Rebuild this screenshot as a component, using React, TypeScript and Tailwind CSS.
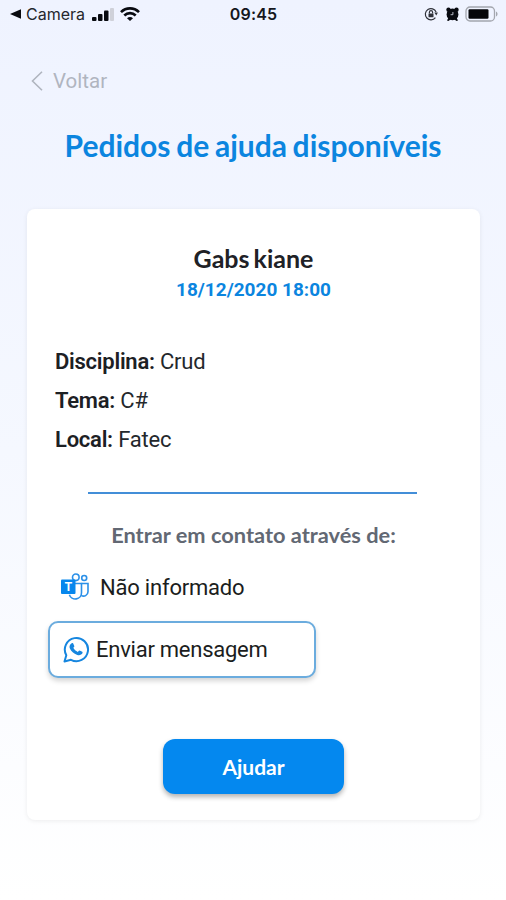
import type { ReactNode } from "react";

function StatusBar() {
    return (
        <div className="grid h-7 grid-cols-[1fr_auto_1fr] items-center pl-[9px] pr-[8px] font-[Inter,sans-serif]">
            <div className="flex items-center">
                <svg className="h-[10px] w-[12px]" viewBox="0 0 12 10" fill="#080a10">
                    <path d="M1 5 12 .3v9.4z" />
                </svg>
                <span className="ml-[5px] w-[60px] whitespace-nowrap text-[16px] leading-5 text-[#25272d]">Camera</span>
                <svg className="ml-[6px] h-[13px] w-[23px]" viewBox="0 0 23 13" fill="#080a10">
                    <rect x="0" y="9" width="4.5" height="4" rx="1" />
                    <rect x="6" y="6" width="4.5" height="7" rx="1" />
                    <rect x="12" y="2.5" width="4.5" height="10.5" rx="1" />
                    <rect x="18" y="0" width="4" height="13" rx="1" fill="#cfd1d9" />
                </svg>
                <svg className="ml-[5px] h-[14px] w-5" viewBox="0 0 20 14" fill="none" stroke="#080a10" strokeWidth="2.6">
                    <path d="M1 5.2C6 .1 14 .1 19 5.2" />
                    <path d="M4.3 8.5c3.2-3.2 8.2-3.2 11.4 0" />
                    <path d="M10 14 7 11.2c1.7-1.6 4.3-1.6 6 0z" fill="#080a10" stroke="none" />
                </svg>
            </div>
            <span className="text-[16px] font-semibold leading-5 tracking-[0.2px] text-[#15171d]">09:45</span>
            <div className="flex items-center justify-end">
                <svg className="h-[14px] w-[14px]" viewBox="0 0 14 14" fill="none" stroke="#30323a" strokeWidth="1.2">
                    <path d="M12.1 5A5.6 5.6 0 1 0 11.4 10.6" />
                    <path d="m10.3 5.6 2 3 1.6-3z" fill="#30323a" stroke="none" />
                    <rect x="4.5" y="6.5" width="5" height="3.7" rx=".5" fill="#30323a" stroke="none" />
                    <path d="M5.4 6.5V5.3a1.6 1.6 0 0 1 3.2 0v1.2" />
                </svg>
                <svg className="ml-2 h-[14px] w-[13px]" viewBox="0 0 13 14">
                    <g fill="#080a10">
                        <circle cx="2.5" cy="2.8" r="2.2" />
                        <circle cx="10.5" cy="2.8" r="2.2" />
                        <circle cx="6.5" cy="7.4" r="5.9" />
                        <path d="m1 13.6 1.5-3h8l1.5 3-1.5.3-2-1.3h-4l-2 1.3z" />
                    </g>
                    <path d="M6.9 5v2.7H4.6" fill="none" stroke="#c8ccd8" strokeWidth=".9" />
                </svg>
                <svg className="ml-[6px] h-4 w-[33px]" viewBox="0 0 33 16">
                    <rect x="1" y="1" width="28.5" height="14" rx="4" fill="none" stroke="#a3a6ae" strokeWidth="1.3" />
                    <rect x="3.5" y="3.3" width="20" height="9.4" rx="1.2" fill="#05060a" />
                    <path d="M31 5.5c2 .8 2 4.2 0 5z" fill="#a3a6ae" />
                </svg>
            </div>
        </div>
    );
}

function TeamsIcon() {
    return (
        <svg className="h-[28px] w-[28px]" viewBox="0 0 28 28" fill="none" stroke="#2b90e8" strokeWidth="1.6">
            <circle cx="14.8" cy="4.3" r="3.3" />
            <circle cx="23.2" cy="5" r="2.5" />
            <path d="M14 10.5h6.5v9.2a6.2 6.2 0 0 1-12.1 2" />
            <path d="M20.5 10.5H27v8.3a4.3 4.3 0 0 1-6.8 3.5" />
            <rect x="0" y="6.5" width="14.5" height="14.5" rx="1" fill="#0787ed" stroke="none" />
            <text x="7.2" y="17.9" textAnchor="middle" fill="white" stroke="none" className="font-['Liberation_Sans',sans-serif] text-[12px] font-bold">T</text>
        </svg>
    );
}

function WhatsAppIcon() {
    return (
        <svg className="h-[27px] w-[27px]" viewBox="0 0 27 27" fill="none">
            <path d="m1.5 25.5 1.8-6.3A11.6 11.6 0 1 1 8 23.8z" stroke="#1686df" strokeWidth="2" strokeLinejoin="round" />
            <path d="M8.3 7.4c.5-.6 1.5-.7 1.9 0l1.1 2.5c.2.5-.1.9-1 1.9 1 1.9 2.4 3.2 4.5 4.1.7-.7 1.1-1.4 1.5-1.5.5-.1 2.4 1 3 1.3.6.4.2 1.8-.4 2.4-1.2 1.2-2.9 1.4-4.6.8-3.6-1.2-6.2-3.6-7.5-6.6-.7-1.7-.1-3.7 1.5-4.9z" fill="#1686df" />
        </svg>
    );
}

function Detail({ label, children }: { label: string; children: ReactNode }) {
    return (
        <p className="text-[22px] leading-[39px] tracking-[-0.2px] text-[#24282c]">
            <strong className="font-semibold tracking-[-0.25px] text-[#1c2024]">{label}:</strong> {children}
        </p>
    );
}

export default function App() {
    return (
        <div className="h-[900px] w-full overflow-hidden bg-linear-to-b from-[#eff3ff] via-[#f5f8ff] to-white font-[Roboto,sans-serif]">
            <StatusBar />

            <header>
                <button className="mt-[39px] ml-[31px] flex h-7 items-center text-[20.5px] text-[#b0b5bf]">
                    <svg className="h-5 w-3" viewBox="0 0 12 20" fill="none" stroke="currentColor" strokeWidth="1.6">
                        <path d="M11 .8 1.5 10l9.5 9.2" />
                    </svg>
                    <span className="ml-[10px]">Voltar</span>
                </button>
                <h1 className="mt-[32px] text-center font-[Lato,sans-serif] text-[30px] font-bold leading-9 [word-spacing:-1.6px] text-[#0b85df]">
                    Pedidos de ajuda disponíveis
                </h1>
            </header>

            <main className="mt-[46px] mr-[26px] ml-[27px] flex h-[611px] flex-col rounded-lg bg-white px-7 pt-[33px] shadow-[0_1px_5px_rgba(0,0,0,0.07)]">
                <div className="text-center">
                    <h2 className="font-[Lato,sans-serif] text-[25px] font-bold leading-8 [word-spacing:-2px] text-[#202126]">Gabs kiane</h2>
                    <p className="mt-px text-[19px] font-bold leading-[30px] text-[#0b85df]">18/12/2020 18:00</p>
                </div>

                <div className="mt-[37px]">
                    <Detail label="Disciplina">Crud</Detail>
                    <Detail label="Tema">C#</Detail>
                    <Detail label="Local">Fatec</Detail>
                </div>

                <hr className="mr-[35px] ml-[33px] mt-[33px] border-t-2 border-[#438ed8]" />

                <p className="mt-[25px] text-center font-[Lato,sans-serif] text-[21.8px] font-bold leading-8 text-[#626873]">
                    Entrar em contato através de:
                </p>

                <div className="mt-[20px] ml-[6px] flex h-8 items-center gap-[11px] text-[22px] tracking-[-0.2px] text-[#1b1d20]">
                    <TeamsIcon />
                    <span>Não informado</span>
                </div>
                <button className="mt-[18px] -ml-[7px] flex h-[57px] w-[268px] items-center gap-[6px] rounded-[10px] border-2 border-[#6bacde] bg-white pb-px pl-[13px] text-[22px] tracking-[-0.25px] text-[#1b1d20] shadow-[0_3px_5px_rgba(0,0,0,0.17)]">
                    <WhatsAppIcon />
                    <span>Enviar mensagem</span>
                </button>

                <button className="mt-[61px] h-[55px] w-[181px] self-center rounded-[12px] bg-[#0488ef] font-[Lato,sans-serif] text-[21px] font-bold text-white shadow-[0_3px_5px_rgba(0,0,0,0.3)]">
                    Ajudar
                </button>
            </main>
        </div>
    );
}
